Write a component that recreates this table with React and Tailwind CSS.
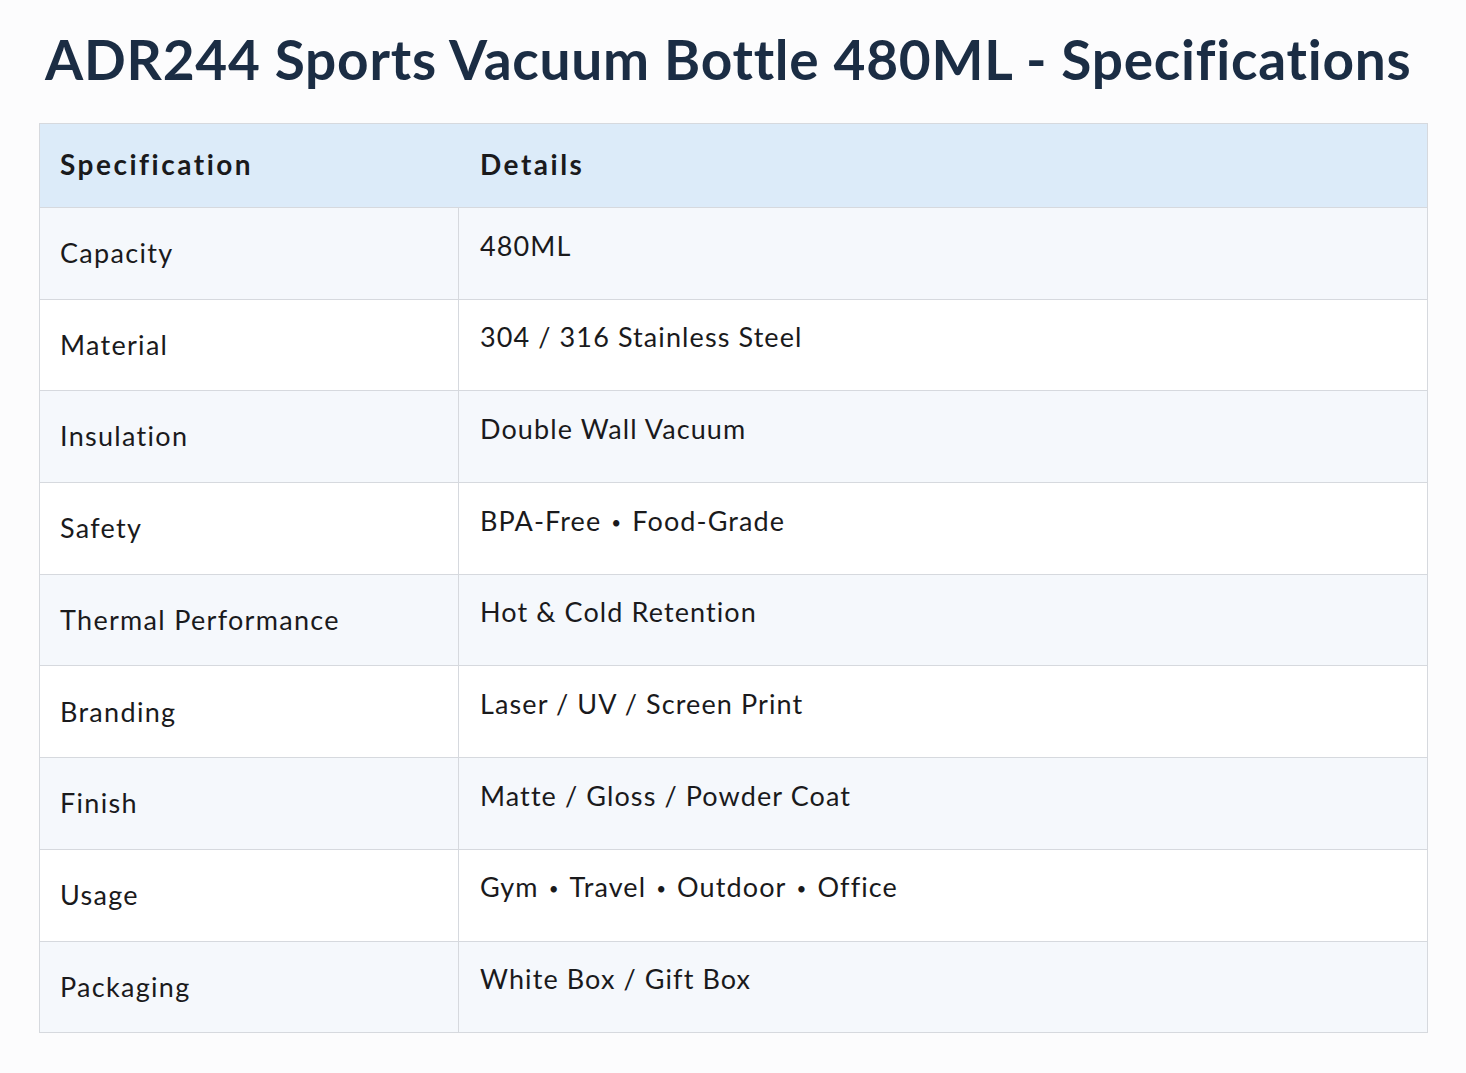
function Val({ text }) {
  const parts = text.split(" • ");
  return (
    <span>
      {parts.map((p, i) => (
        <span key={i}>
          {i > 0 && <span className="mx-[10px] align-[2px] text-[17px]">•</span>}
          {p}
        </span>
      ))}
    </span>
  );
}

export default function App() {
  const rows = [
    ["Capacity", "480ML"],
    ["Material", "304 / 316 Stainless Steel"],
    ["Insulation", "Double Wall Vacuum"],
    ["Safety", "BPA-Free • Food-Grade"],
    ["Thermal Performance", "Hot & Cold Retention"],
    ["Branding", "Laser / UV / Screen Print"],
    ["Finish", "Matte / Gloss / Powder Coat"],
    ["Usage", "Gym • Travel • Outdoor • Office"],
    ["Packaging", "White Box / Gift Box"],
  ];
  return (
    <div className="min-h-[1073px] w-[1466px] bg-[#fcfcfd] pt-[25px]" style={{ fontFamily: "Lato, 'Open Sans', sans-serif" }}>
      <h1 className="pl-[45px] text-[55px] font-bold leading-[68px] tracking-[0.75px] text-[#1b2d44]">
        ADR244 Sports Vacuum Bottle 480ML - Specifications
      </h1>
      <div className="ml-[39px] mr-[38px] mt-[30px] border border-[#d6d9de] text-[#1a1a1c]">
        <div className="flex h-[83px] items-center bg-[#dcebf9] pb-[4px] text-[28px] font-bold tracking-[2.5px]">
          <div className="w-[419px] pl-[20px]">Specification</div>
          <div className="pl-[21px]">Details</div>
        </div>
        {rows.map(([k, v], i) => (
          <div key={k} className={`flex h-[91.7px] border-t border-[#d6d9de] text-[27px] tracking-[1.3px] ${i % 2 === 0 ? "bg-[#f5f8fc]" : "bg-white"}`}>
            <div className="flex w-[419px] items-center border-r border-[#d6d9de] pl-[20px]">{k}</div>
            <div className="flex items-center pl-[21px] pb-[15px] tracking-[1.1px]"><Val text={v} /></div>
          </div>
        ))}
      </div>
    </div>
  );
}
